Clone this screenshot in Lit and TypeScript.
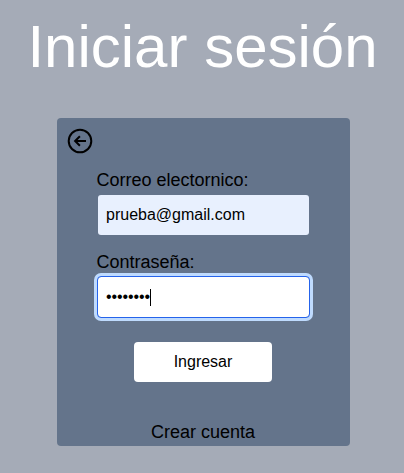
import { LitElement, html, css } from "lit";
import { customElement } from "lit/decorators.js";

@customElement("app-root")
export class AppRoot extends LitElement {
  static styles = css`
    :host {
      display: block;
      box-sizing: border-box;
      height: 100vh;
      overflow: hidden;
      background: #a5abb7;
      color: #000;
      font-family: "Liberation Sans", Arial, sans-serif;
    }
    h1 {
      margin: 0;
      padding: 17px 0 0 1px;
      font-size: 60px;
      line-height: 60px;
      font-weight: 400;
      text-align: center;
      white-space: nowrap;
      color: #fff;
    }
    .card {
      box-sizing: border-box;
      width: 293px;
      height: 328px;
      margin: 41px 0 0 57px;
      padding: 10px 0 0 10px;
      border-radius: 4px;
      background: #64748b;
      font-size: 18px;
      line-height: 28px;
    }
    .back {
      display: block;
      width: 26px;
      height: 26px;
    }
    .form {
      display: flex;
      flex-direction: column;
      width: 213px;
      margin: 12px 0 0 30px;
    }
    .label {
      margin-left: -0.5px;
    }
    .field {
      box-sizing: border-box;
      display: flex;
      align-items: center;
      height: 42px;
      padding: 0 8px;
      border: 1px solid transparent;
      border-radius: 4px;
      background: #fff;
      background-clip: padding-box;
      font-size: 16px;
      line-height: 24px;
    }
    .filled {
      background-color: #e8f0fe;
    }
    .focused {
      border-color: #2563eb;
      box-shadow: 0 0 0 3px #bfdbfe;
    }
    .dots {
      letter-spacing: -0.1px;
    }
    .second {
      margin-top: 12px;
    }
    .caret {
      width: 1px;
      height: 17px;
      background: #000;
    }
    .submit {
      box-sizing: border-box;
      width: 138px;
      height: 40px;
      margin: 24px 0 0 37px;
      padding: 0;
      border: 0;
      border-radius: 4px;
      background: #fff;
      color: #000;
      font: 16px/24px "Liberation Sans", Arial, sans-serif;
    }
    .create {
      margin: 36px 1px 0 0;
      text-align: center;
    }
  `;

  render() {
    return html`
      <h1>Iniciar sesión</h1>
      <div class="card">
        <svg class="back" viewBox="0 0 26 26" fill="none" stroke="#000" stroke-width="2">
          <circle cx="13" cy="13" r="11.3" />
          <path d="M19 13H8.5M12.9 8.2L8.1 13L12.9 17.8" />
        </svg>
        <div class="form">
          <div class="label">Correo electornico:</div>
          <div class="field filled">prueba@gmail.com</div>
          <div class="label second">Contraseña:</div>
          <div class="field focused"><span class="dots">••••••••</span><span class="caret"></span></div>
          <button class="submit">Ingresar</button>
          <div class="create">Crear cuenta</div>
        </div>
      </div>
    `;
  }
}
